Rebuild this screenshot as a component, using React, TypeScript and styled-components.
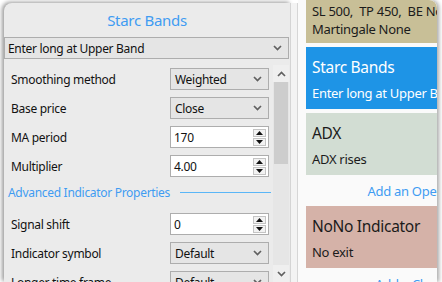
import React from 'react';
import styled, { createGlobalStyle } from 'styled-components';

// Types
type Field = {
	label: string;
	kind: 'select' | 'number';
	value: string;
};

type Card = {
	title: string;
	text: string;
	tone: 'blue' | 'green' | 'red';
};

// Data
const mainFields: Field[] = [
	{ label: 'Smoothing method', kind: 'select', value: 'Weighted' },
	{ label: 'Base price', kind: 'select', value: 'Close' },
	{ label: 'MA period', kind: 'number', value: '170' },
	{ label: 'Multiplier', kind: 'number', value: '4.00' },
];

const advancedFields: Field[] = [
	{ label: 'Signal shift', kind: 'number', value: '0' },
	{ label: 'Indicator symbol', kind: 'select', value: 'Default' },
	{ label: 'Longer time frame', kind: 'select', value: 'Default' },
];

const openCards: Card[] = [
	{ title: 'Starc Bands', text: 'Enter long at Upper Band', tone: 'blue' },
	{ title: 'ADX', text: 'ADX rises', tone: 'green' },
];

const cardColors = {
	blue: { bg: '#1e94e6', fg: '#ffffff' },
	green: { bg: '#d2ddd3', fg: '#1b1b1b' },
	red: { bg: '#d5b2a8', fg: '#1b1b1b' },
};

const Chevron: React.FC<{ up?: boolean }> = ({ up }) => (
	<svg width="9" height="6" viewBox="0 0 9 6">
		<path
			d={ up ? 'M1 5 L4.5 1.5 L8 5' : 'M1 1 L4.5 4.5 L8 1' }
			fill="none"
			stroke="#606060"
			strokeWidth="1.7"
		/>
	</svg>
);

const Spinner: React.FC = () => (
	<SpinBox>
		<SpinButton>
			<svg width="7" height="4" viewBox="0 0 7 4"><path d="M0 4 L3.5 0 L7 4 Z" fill="#111" /></svg>
		</SpinButton>
		<SpinButton>
			<svg width="7" height="4" viewBox="0 0 7 4"><path d="M0 0 L3.5 4 L7 0 Z" fill="#111" /></svg>
		</SpinButton>
	</SpinBox>
);

const FieldRow: React.FC<{ field: Field }> = ({ field }) => (
	<Row>
		<Label>{ field.label }</Label>
		{ field.kind === 'select' ? (
			<Combo>
				<span>{ field.value }</span>
				<Chevron />
			</Combo>
		) : (
			<NumberBox>
				<span>{ field.value }</span>
				<Spinner />
			</NumberBox>
		) }
	</Row>
);

const App: React.FC = () => (
	<>
		<GlobalStyle />
		<Window>
			<LeftPanel>
				<Title>Starc Bands</Title>
				<WideCombo>
					<span>Enter long at Upper Band</span>
					<Chevron />
				</WideCombo>
				<ScrollArea>
					<Form>
						{ mainFields.map((f) => <FieldRow key={ f.label } field={ f } />) }
						<SectionHeader>
							<span>Advanced Indicator Properties</span>
							<SectionLine />
						</SectionHeader>
						{ advancedFields.map((f) => <FieldRow key={ f.label } field={ f } />) }
					</Form>
					<ScrollBar>
						<ScrollArrow><Chevron up /></ScrollArrow>
						<Thumb />
						<Track />
						<ScrollArrow><Chevron /></ScrollArrow>
					</ScrollBar>
				</ScrollArea>
			</LeftPanel>
			<Gutter />
			<RightPanel>
				<Column>
					<InfoCard>
						<div>SL 500,&nbsp; TP 450,&nbsp; BE None</div>
						<div>Martingale None</div>
					</InfoCard>
					<Cards>
						{ openCards.map((c) => (
							<SlotCard key={ c.title } tone={ c.tone }>
								<CardTitle>{ c.title }</CardTitle>
								<CardText>{ c.text }</CardText>
							</SlotCard>
						)) }
					</Cards>
					<AddLink>Add an Opening Condition</AddLink>
					<SlotCard tone="red">
						<CardTitle>NoNo Indicator</CardTitle>
						<CardText>No exit</CardText>
					</SlotCard>
					<AddLink>Add a Closing Condition</AddLink>
				</Column>
			</RightPanel>
		</Window>
	</>
);
export default App;

// Styles
const GlobalStyle = createGlobalStyle`
	html, body {
		margin: 0;
		padding: 0;
		background: #ffffff;
		overflow: hidden;
	}
	body {
		font-family: "Noto Sans", "Open Sans", sans-serif;
		font-size: 12px;
		letter-spacing: -0.3px;
		color: #151515;
	}
`;

const Window = styled.div`
	display: flex;
	width: 437px;
	height: 282px;
	overflow: hidden;
	border-radius: 0 8px 0 0;
	background: #ffffff;
	box-shadow: 2px 0 4px rgba(0, 0, 0, 0.35);
`;

const LeftPanel = styled.div`
	width: 286px;
	margin: 3px 0 0 4px;
	display: flex;
	flex-direction: column;
	background: #ebebeb;
	border-right: 1px solid #d4d4d4;
	border-radius: 8px 0 0 0;
	box-shadow: -2px -1px 4px rgba(0, 0, 0, 0.4);
`;

const Title = styled.div`
	height: 34px;
	display: flex;
	align-items: center;
	justify-content: center;
	font-size: 15px;
	color: #3f9cf2;
`;

const ComboBase = styled.div`
	height: 22px;
	box-sizing: border-box;
	display: flex;
	align-items: center;
	justify-content: space-between;
	padding: 0 6px 0 4px;
	background: #e5e5e5;
	border: 1px solid #adadad;
	color: #111;
	font-size: 12px;
`;

const WideCombo = styled(ComboBase)`
	width: 285px;
	padding-left: 3px;
`;

const Combo = styled(ComboBase)`
	width: 99px;
`;

const NumberBox = styled(ComboBase)`
	width: 99px;
	padding: 0 2px 0 3px;
	background: #ffffff;
`;

const SpinBox = styled.div`
	display: flex;
	flex-direction: column;
	gap: 1px;
`;

const SpinButton = styled.div`
	width: 13px;
	height: 8px;
	box-sizing: border-box;
	display: flex;
	align-items: center;
	justify-content: center;
	border: 1px solid #c4c4c4;
	background: #f2f2f2;
`;

const ScrollArea = styled.div`
	flex: 1;
	display: flex;
	margin-top: 6px;
	overflow: hidden;
`;

const Form = styled.div`
	flex: 1;
	display: flex;
	flex-direction: column;
	gap: 7px;
	padding: 3px 4px 0 7px;
`;

const Row = styled.div`
	display: flex;
	align-items: center;
	justify-content: space-between;
	flex-shrink: 0;
`;

const Label = styled.span`
	color: #121212;
`;

const SectionHeader = styled.div`
	height: 22px;
	box-sizing: border-box;
	padding-bottom: 6px;
	display: flex;
	align-items: center;
	gap: 10px;
	margin-left: -3px;
	color: #3f9cf2;
	flex-shrink: 0;
`;

const SectionLine = styled.div`
	flex: 1;
	height: 1px;
	margin-right: -2px;
	background: #5ab6f7;
`;

const ScrollBar = styled.div`
	width: 16px;
	margin-right: 1px;
	display: flex;
	flex-direction: column;
	background: #e6e6e6;
`;

const ScrollArrow = styled.div`
	height: 17px;
	display: flex;
	align-items: center;
	justify-content: center;
	background: #efefef;
`;

const Thumb = styled.div`
	height: 82px;
	margin: 0 1px;
	background: #cdcdcd;
`;

const Track = styled.div`
	flex: 1;
`;

const Gutter = styled.div`
	width: 6px;
	margin-top: 3px;
	background: #f3f3f3;
	border-right: 1px solid #d6d6d6;
`;

const RightPanel = styled.div`
	flex: 1;
	overflow: hidden;
	padding-left: 8px;
	background: #fafafa;
`;

const Column = styled.div`
	width: 278px;
	display: flex;
	flex-direction: column;
`;

const InfoCard = styled.div`
	padding: 2px 6px 5px;
	line-height: 18px;
	font-size: 13px;
	background: #c8bf97;
	color: #1b1b1b;
	white-space: pre;
`;

const Cards = styled.div`
	display: flex;
	flex-direction: column;
	gap: 4px;
	margin-top: 4px;
`;

const SlotCard = styled.div<{ tone: Card['tone'] }>`
	display: flex;
	flex-direction: column;
	gap: 6px;
	padding: 9px 6px 7px;
	background: ${ (p) => cardColors[p.tone].bg };
	color: ${ (p) => cardColors[p.tone].fg };
`;

const CardTitle = styled.div`
	font-size: 15.5px;
	line-height: 22px;
`;

const CardText = styled.div`
	font-size: 13px;
	line-height: 18px;
`;

const AddLink = styled.div`
	height: 31px;
	display: flex;
	align-items: center;
	justify-content: center;
	font-size: 13px;
	color: #3f9cf2;
`;
